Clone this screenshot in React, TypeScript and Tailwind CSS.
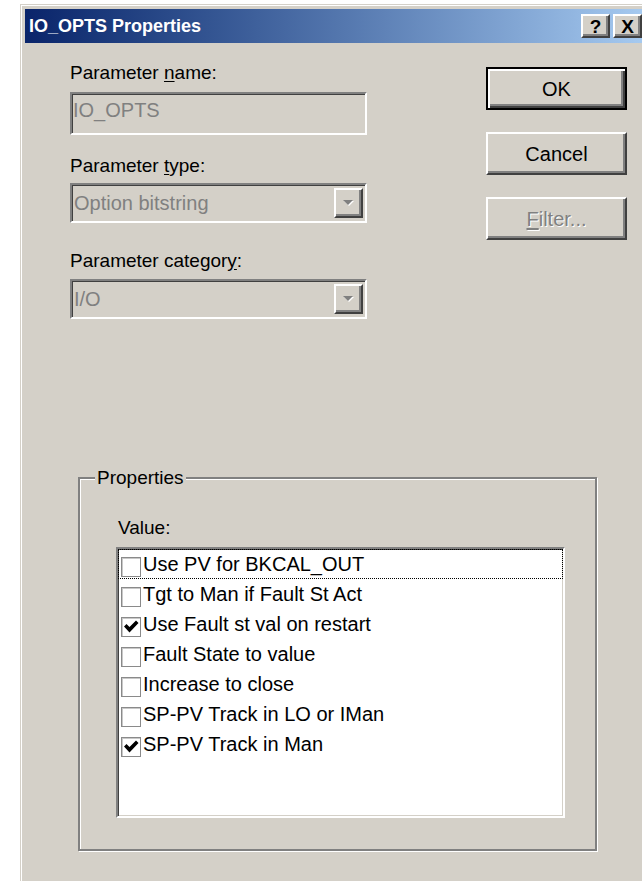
import React from "react";

const FONT = "font-['Liberation_Sans',Arial,sans-serif]";

interface OptionBit {
  label: string;
  checked: boolean;
}

const BITS: OptionBit[] = [
  { label: "Use PV for BKCAL_OUT", checked: false },
  { label: "Tgt to Man if Fault St Act", checked: false },
  { label: "Use Fault st val on restart", checked: true },
  { label: "Fault State to value", checked: false },
  { label: "Increase to close", checked: false },
  { label: "SP-PV Track in LO or IMan", checked: false },
  { label: "SP-PV Track in Man", checked: true },
];

// classic raised 3D button edges
const RAISED =
  "border-2 border-t-white border-l-white border-r-[#404040] border-b-[#404040] shadow-[inset_-2px_-2px_0_#808080]";

// sunken edit / combo edges
const SUNKEN =
  "border-2 border-t-[#808080] border-l-[#808080] border-r-white border-b-white shadow-[inset_1px_1px_0_#404040]";

function DropArrow() {
  return (
    <div className={`flex h-[30px] w-[29px] items-center justify-center bg-[#d4d0c8] ${RAISED}`}>
      <svg width="13" height="8" viewBox="0 0 13 8">
        <path d="M2 2h10L7 7z" fill="#fff" />
        <path d="M1 1h10L6 6z" fill="#808080" />
      </svg>
    </div>
  );
}

function DisabledCombo({ value }: { value: string }) {
  return (
    <div className={`flex h-[40px] w-[297px] items-center py-[3px] pl-[2px] pr-[2px] ${SUNKEN}`}>
      <span className="flex-1 text-[20px] leading-[22px] text-[#808080]">{value}</span>
      <DropArrow />
    </div>
  );
}

function CheckBox({ checked }: { checked: boolean }) {
  return (
    <span className="mt-[5px] ml-[2px] flex h-[20px] w-[20px] shrink-0 items-center justify-center border border-[#8a8a8a] bg-white shadow-[inset_1px_1px_0_#c8c8c8]">
      {checked && (
        <svg width="16" height="14" viewBox="0 0 16 14">
          <path d="M1 6.5l2.5-2.5 3 3L13 0.5l2.5 2.5-9 9.5z" fill="#000" />
        </svg>
      )}
    </span>
  );
}

export default function App() {
  return (
    <div className={`h-[881px] w-[642px] overflow-hidden bg-white pl-[20px] pt-[4px] ${FONT}`}>
      <div className="h-[900px] w-[627px] border-t border-l border-[#d4d0c8] bg-[#d4d0c8]">
        <div className="h-full border-t border-l border-white p-[3px]">
          {/* caption */}
          <div className="flex h-[34px] items-center bg-linear-to-r from-[#0a246a] to-[#a6caf0] pl-[4px] pr-[2px]">
            <span className="flex-1 text-[18px] font-bold leading-none text-white">IO_OPTS Properties</span>
            <div className="flex gap-[3px]">
              <button className={`flex h-[24px] w-[29px] items-center justify-center bg-[#d4d0c8] text-[19px] font-bold leading-none text-black ${RAISED}`}>
                ?
              </button>
              <button className={`flex h-[24px] w-[29px] items-center justify-center bg-[#d4d0c8] text-[19px] font-bold leading-none text-black ${RAISED}`}>
                X
              </button>
            </div>
          </div>

          {/* body */}
          <div className="text-[19px] leading-[22px] text-black">
            <div className="flex pl-[45px]">
              <div className="flex w-[297px] flex-col pt-[19px]">
                <label>
                  Parameter <u className="underline-offset-2">n</u>ame:
                </label>
                <div className={`mt-[8px] h-[43px] w-[297px] pt-[5px] pl-[1px] text-[20px] text-[#808080] ${SUNKEN}`}>
                  IO_OPTS
                </div>
                <label className="mt-[20px]">
                  Parameter <u className="underline-offset-2">t</u>ype:
                </label>
                <div className="mt-[6px]">
                  <DisabledCombo value="Option bitstring" />
                </div>
                <label className="mt-[27px]">
                  Parameter categor<u className="underline-offset-2">y</u>:
                </label>
                <div className="mt-[7px]">
                  <DisabledCombo value="I/O" />
                </div>
              </div>

              <div className="ml-[119px] flex w-[141px] flex-col gap-[22px] pt-[24px] text-[20px]">
                <button className="h-[43px] w-[141px] border-2 border-black bg-[#d4d0c8] shadow-[inset_2px_2px_0_#fff,inset_-2px_-2px_0_#404040,inset_-4px_-4px_0_#808080]">
                  OK
                </button>
                <button className={`h-[43px] w-[141px] bg-[#d4d0c8] ${RAISED}`}>Cancel</button>
                <button className={`h-[43px] w-[141px] bg-[#d4d0c8] text-[#808080] [text-shadow:1px_1px_0_#fff] ${RAISED}`}>
                  <u className="underline-offset-2">F</u>ilter...
                </button>
              </div>
            </div>

            {/* Properties group */}
            <div className="relative mt-[158px] ml-[53px] h-[374px] w-[519px] border-2 border-[#808080] shadow-[inset_1px_1px_0_#fff,1px_1px_0_#fff]">
              <span className="absolute top-[-12px] left-[15px] bg-[#d4d0c8] px-[2px]">Properties</span>
              <div className="pt-[38px] pl-[36px]">
                <div className="pl-[2px]">Value:</div>
                <div className="mt-[8px] h-[271px] w-[449px] border-2 border-t-[#808080] border-l-[#808080] border-r-white border-b-white bg-white shadow-[inset_1px_1px_0_#404040,inset_-1px_-1px_0_#d4d0c8] text-[20px]">
                  {BITS.map((bit, i) => (
                    <div
                      key={bit.label}
                      className={`flex h-[30px] items-center border ${i === 0 ? "border-dotted border-black" : "border-transparent"}`}
                    >
                      <CheckBox checked={bit.checked} />
                      <span className="ml-[2px] whitespace-nowrap">{bit.label}</span>
                    </div>
                  ))}
                </div>
              </div>
            </div>
          </div>
        </div>
      </div>
    </div>
  );
}
